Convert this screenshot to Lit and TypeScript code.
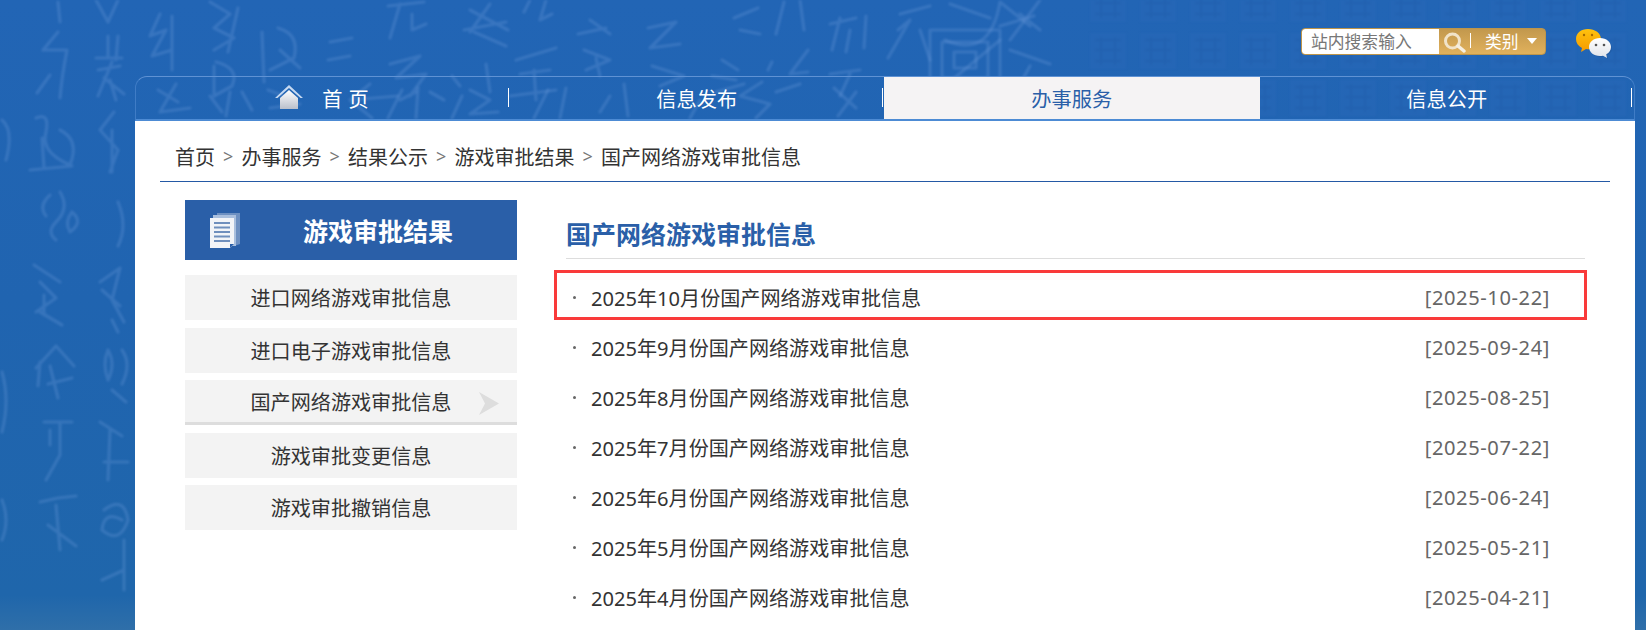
import { LitElement, html, css, svg } from "lit";
import { customElement } from "lit/decorators.js";

// strokes of the faint calligraphy behind the page
const TRACOS = [
  // left columns
  "M58 2 L60 22 M58 32 L43 50 M43 50 L67 50 Q62 75 60 98 M37 93 L50 75",
  "M96 0 L108 22 M118 0 L108 22",
  "M108 36 L108 56 M118 36 L116 60 M96 58 L122 58 M98 70 L120 66 M112 62 L98 96 M104 78 L124 94 M110 80 L116 100",
  "M36 118 Q50 112 46 132 Q40 152 70 165 Q80 140 60 130 M42 138 L44 168 M30 170 L72 166",
  "M114 112 L100 130 L118 150 L110 172 M112 130 L112 172",
  "M2 120 Q14 130 6 160",
  "M50 195 Q38 206 46 216 M60 192 Q70 208 56 222 Q46 232 56 240 M72 212 Q84 222 70 232 Q64 222 72 212",
  "M118 202 Q128 226 118 246",
  "M34 265 L60 282 M40 282 L56 298 L36 312 M44 295 L44 315 M40 312 L62 325",
  "M100 282 L120 268 L112 300 L124 322 M102 290 L120 306 M112 320 L118 332",
  "M36 368 L56 346 L74 366 M40 362 L38 386 M50 366 L58 398 M48 384 L72 378",
  "M108 350 Q116 364 108 380 Q102 364 108 350 M122 350 Q132 364 122 384 M112 390 L126 402",
  "M44 422 L72 422 M60 422 L60 455 L46 480 M50 430 L50 445",
  "M100 422 L122 436 M110 430 L108 480 M104 462 L128 462",
  "M40 502 L58 498 L76 496 M56 505 L60 550 M48 525 L76 546",
  "M104 510 Q124 495 128 520 Q120 545 102 530 Q104 510 122 520 M124 540 L124 590 M102 580 L124 570",
  "M2 372 Q10 400 2 432",
  "M2 500 Q10 520 2 540",
  // upper band
  "M160 14 L150 36 L166 30 L152 56 L172 50 M172 16 L172 70",
  "M210 2 L230 14 L214 28 L234 38 L214 50 M238 8 L228 52 M216 62 Q240 68 232 86 L214 96 L214 66",
  "M262 32 L264 82 M278 28 Q300 34 294 58 L270 70 M300 68 L280 50",
  "M330 42 L352 38 M328 60 L350 56",
  "M388 6 L424 2 M400 4 L390 38 M412 14 L412 30 L426 24",
  "M390 64 L420 56 L396 78 L426 74 L410 96 M400 100 L416 92",
  "M470 10 L508 30 M464 30 L506 22 M490 4 L470 32 M474 32 L506 46",
  "M452 76 L460 86 M486 64 L490 92",
  "M524 12 L530 0 M546 0 L540 20 L552 14",
  "M516 60 L556 48 M520 74 L550 70 M534 70 L536 100 M510 96 L556 90",
  "M590 20 L610 34 M578 34 L606 28 M584 50 L610 60 L586 70 M596 58 L600 76",
  "M648 28 L676 22 L650 48 L680 44 M652 66 L684 76 L660 86",
  "M734 18 L758 8 M740 30 L760 34",
  "M784 2 L776 34 M800 0 L804 30",
  "M830 24 L856 18 M840 18 L832 50 M850 30 L846 52 M866 16 L864 48",
  "M900 14 L930 6 M898 30 L910 20 L888 58 M920 30 L930 60",
  "M945 40 Q990 60 1000 2 L1030 26 M940 90 L1000 40",
  "M1040 0 L1010 40 M1020 14 L1040 30",
  "M722 60 L738 70 M712 76 L736 80 M716 92 L744 84",
  "M772 62 L768 70 M808 50 L790 74 L808 72",
  "M830 74 L860 70 M850 74 L840 96",
  "M950 4 L990 18 M1000 26 L1034 16",
  "M1010 50 L1050 64 M1030 66 L1020 84",
  // seal block in the middle
  "M930 30 H1000 V90 H930 Z M942 42 H988 V78 H942 Z M954 52 H976 V68 H954 Z",
  // nav band
  "M158 90 L178 102 M176 84 L160 112 M160 112 L190 108",
  "M230 92 L226 116 M210 96 L222 112 M242 92 L252 110",
  "M268 90 L290 98 M270 108 L300 104",
  "M370 84 L350 100 L372 118 M350 100 L398 96",
  "M402 90 L388 118 M418 88 L416 118 M430 92 L444 100",
  "M462 96 L452 118 M470 90 L490 100 L470 114 L498 112",
  "M548 90 L534 118 M566 88 L560 118",
  "M610 96 L600 112 M624 84 L628 116",
  "M762 82 L740 96 L770 104 L756 118 M776 92 L800 84",
  "M834 88 L856 108 M856 92 L838 116",
  "M1020 84 L1000 100 M990 92 L1030 118",
  "M700 100 L690 118",
];

const itens = [
  { texto: "进口网络游戏审批信息" },
  { texto: "进口电子游戏审批信息" },
  { texto: "国产网络游戏审批信息", ativo: true },
  { texto: "游戏审批变更信息" },
  { texto: "游戏审批撤销信息" },
];

const linhas = [
  ["2025年10月份国产网络游戏审批信息", "[2025-10-22]"],
  ["2025年9月份国产网络游戏审批信息", "[2025-09-24]"],
  ["2025年8月份国产网络游戏审批信息", "[2025-08-25]"],
  ["2025年7月份国产网络游戏审批信息", "[2025-07-22]"],
  ["2025年6月份国产网络游戏审批信息", "[2025-06-24]"],
  ["2025年5月份国产网络游戏审批信息", "[2025-05-21]"],
  ["2025年4月份国产网络游戏审批信息", "[2025-04-21]"],
];

const migalhas = ["首页", "办事服务", "结果公示", "游戏审批结果", "国产网络游戏审批信息"];

// seal tiles in the upper right corner
const selos = () => {
  const out = [];
  for (let col = 0; col < 11; col++) {
    for (let lin = 0; lin < 3; lin++) {
      const x = 1090 + col * 50;
      const y = -14 + lin * 47;
      out.push(svg`<rect class="selo" x=${x} y=${y} width="36" height="36"></rect>
        <path class="selo-traco" d=${`M${x + 5} ${y + 7}H${x + 31}M${x + 5} ${y + 17}H${x + 31}M${x + 5} ${y + 28}H${x + 31}M${x + 11} ${y + 4}V${y + 32}M${x + 25} ${y + 4}V${y + 32}`}></path>`);
    }
  }
  return out;
};

@customElement("app-root")
export class AppRoot extends LitElement {
  static styles = css`
    :host {
      display: block;
      position: relative;
      width: 1646px;
      height: 630px;
      overflow: hidden;
      background: linear-gradient(#2265b5 0, #2064b0 300px, #1f66ab 595px, #2f6fa9 630px);
      font-family: "Noto Sans", "Noto Sans CJK SC", sans-serif;
      color: #333;
    }

    .fundo {
      position: absolute;
      inset: 0;
      filter: blur(1px);
    }

    .fundo path.traco {
      fill: none;
      stroke: #6c9cdc;
      stroke-opacity: 0.3;
      stroke-width: 3.2;
      stroke-linecap: round;
      stroke-linejoin: round;
    }

    .fundo .selo {
      fill: #2b6ab8;
      fill-opacity: 0.4;
    }

    .fundo .selo-traco {
      fill: none;
      stroke: #1f5ba8;
      stroke-opacity: 0.4;
      stroke-width: 2;
    }

    .pagina {
      position: relative;
      display: flex;
      flex-direction: column;
      height: 100%;
    }

    .topo {
      display: flex;
      justify-content: flex-end;
      align-items: flex-start;
      height: 76px;
      padding: 28px 35px 0 0;
      box-sizing: border-box;
    }

    .busca {
      display: flex;
      width: 245px;
      height: 27px;
      border-radius: 4px;
      overflow: hidden;
      box-sizing: border-box;
      border: 1px solid #bd954a;
      background: linear-gradient(#c2984d, #e1b15c);
      color: #fff;
      font-size: 16.8px;
    }

    .busca .campo {
      width: 137px;
      padding-left: 9px;
      box-sizing: border-box;
      background: #fff;
      border-radius: 3px 0 0 3px;
      color: #777;
      font-size: 16.8px;
      line-height: 25px;
      white-space: nowrap;
    }

    .busca .lupa {
      width: 24px;
      height: 24px;
      margin: 1px 0 0 3px;
    }

    .busca .risco {
      width: 1px;
      height: 15px;
      margin: 4px 14px 0 4px;
      background: #fff;
    }

    .busca .tipo {
      line-height: 25px;
    }

    .busca .seta {
      width: 0;
      height: 0;
      margin: 9px 0 0 8px;
      border-left: 5px solid transparent;
      border-right: 5px solid transparent;
      border-top: 6px solid #fff;
    }

    .wechat {
      width: 38px;
      height: 31px;
      margin: 0 -2px 0 29px;
    }

    nav {
      display: grid;
      grid-template-columns: repeat(4, 1fr);
      width: 1500px;
      height: 45px;
      margin-left: 135px;
      box-sizing: border-box;
      border: 1px solid #5f92d4;
      border-bottom: 2px solid #4d8bd4;
      border-left-color: #3f7cc6;
      border-right-color: #3f7cc6;
      border-radius: 12px 12px 0 0;
    }

    nav a {
      display: flex;
      justify-content: center;
      align-items: center;
      gap: 19px;
      position: relative;
      color: #fff;
      font-size: 20.2px;
    }

    nav a:nth-child(-n + 2) {
      padding-right: 2px;
    }

    nav a::after {
      content: "";
      position: absolute;
      right: 2px;
      top: 11px;
      width: 1px;
      height: 19px;
      background: #fff;
    }

    nav a.ativo {
      background: #f5f3f4;
      color: #2a5fa8;
      margin-left: -1px;
    }

    nav a.ativo::after {
      display: none;
    }

    nav .casa {
      width: 28px;
      height: 24px;
      margin-top: -3px;
    }

    nav .inicio {
      letter-spacing: 0.5px;
    }

    .painel {
      flex: 1;
      width: 1500px;
      margin-left: 135px;
      background: #fff;
    }

    .migalhas {
      display: flex;
      align-items: center;
      height: 61px;
      margin: 0 25px;
      padding: 10px 0 0 15px;
      border-bottom: 1px solid #2459a5;
      font-size: 20px;
      box-sizing: border-box;
    }

    .migalhas i {
      width: 26.5px;
      text-align: center;
      font-style: normal;
      color: #777;
      font-size: 18px;
    }

    .corpo {
      display: flex;
      gap: 49px;
      padding: 18px 50px 0;
    }

    aside {
      width: 332px;
      flex: none;
    }

    .lateral-topo {
      display: flex;
      align-items: center;
      height: 60px;
      margin-bottom: 15px;
      background: #2a5fa8;
      color: #fff;
      font-size: 25px;
      font-weight: 700;
    }

    .lateral-topo svg {
      width: 34px;
      height: 38px;
      margin: 0 61px 0 23px;
    }

    .itens {
      display: grid;
      grid-auto-rows: 45px;
      row-gap: 7.5px;
    }

    .item {
      position: relative;
      display: flex;
      justify-content: center;
      align-items: center;
      box-sizing: border-box;
      background: #f3f3f3;
      font-size: 20.1px;
    }

    .item.ativo {
      border-bottom: 3px solid #ddd;
    }

    .item.ativo svg {
      position: absolute;
      right: 18px;
      top: 12px;
      width: 21px;
      height: 23px;
    }

    main {
      flex: 1;
      min-width: 0;
    }

    h2 {
      margin: 0 0 13px;
      height: 59px;
      line-height: 68px;
      box-sizing: border-box;
      border-bottom: 1px solid #ddd;
      color: #2a5fa8;
      font-size: 25px;
      font-weight: 700;
    }

    .linha {
      position: relative;
      display: flex;
      align-items: center;
      height: 50px;
      padding: 0 35px 0 25px;
      font-size: 20.1px;
    }

    .linha::before {
      content: "";
      position: absolute;
      left: 7px;
      top: 24px;
      width: 3px;
      height: 3px;
      border-radius: 50%;
      background: #666;
    }

    .linha span {
      flex: 1;
    }

    .linha time {
      color: #666;
      letter-spacing: 0.6px;
    }

    .marca {
      position: absolute;
      inset: -2px -2px 2px -12px;
      border: 3px solid #f93a3a;
    }
  `;

  render() {
    return html`
      <svg class="fundo" viewBox="0 0 1646 630" width="1646" height="630">
        ${selos()}
        ${TRACOS.map((d) => svg`<path class="traco" d=${d}></path>`)}
      </svg>
      <div class="pagina">
        <div class="topo">
          <div class="busca">
            <div class="campo">站内搜索输入</div>
            <svg class="lupa" viewBox="0 0 24 24">
              <circle cx="10.5" cy="11" r="7" fill="none" stroke="#f1e3c8" stroke-width="3"></circle>
              <path d="M16 16l6 5" stroke="#f6efe0" stroke-width="3.5" stroke-linecap="round"></path>
            </svg>
            <div class="risco"></div>
            <div class="tipo">类别</div>
            <div class="seta"></div>
          </div>
          <svg class="wechat" viewBox="0 0 38 31">
            <defs>
              <linearGradient id="amarelo" x1="0" y1="0" x2="0" y2="1">
                <stop offset="0" stop-color="#ffc20e"></stop>
                <stop offset="1" stop-color="#f59a00"></stop>
              </linearGradient>
              <linearGradient id="branco" x1="0" y1="0" x2="0" y2="1">
                <stop offset="0" stop-color="#ffffff"></stop>
                <stop offset="1" stop-color="#dfe3ea"></stop>
              </linearGradient>
            </defs>
            <path d="M13 1C6 1 1 5 1 11c0 4 2 7 6 9l-1 4 5-3c1 .2 2 .2 3 .2 7 0 12-4.500 12-10.200S20 1 13 1z" fill="url(#amarelo)"></path>
            <circle cx="9" cy="7" r="1.200" fill="#a66a00"></circle>
            <circle cx="17" cy="7" r="1.200" fill="#a66a00"></circle>
            <path d="M25 10c-6.500 0-11 4-11 9s4.500 9 11 9c1 0 2 0 3-.3l4 2.300-.8-3.700c3-1.600 4.800-4.200 4.800-7.300 0-5-4.500-9-11-9z" fill="#1c4f8f" opacity=".35" transform="translate(1 1)"></path>
            <path d="M25 10c-6.500 0-11 4-11 9s4.500 9 11 9c1 0 2 0 3-.3l4 2.300-.8-3.700c3-1.600 4.800-4.200 4.800-7.300 0-5-4.500-9-11-9z" fill="url(#branco)"></path>
            <circle cx="21" cy="17" r="1.300" fill="#555"></circle>
            <circle cx="29" cy="17" r="1.300" fill="#555"></circle>
          </svg>
        </div>
        <nav>
          <a>
            <svg class="casa" viewBox="0 0 28 24">
              <defs>
                <linearGradient id="parede" x1="0" y1="0" x2="0" y2="1">
                  <stop offset="0" stop-color="#ffffff"></stop>
                  <stop offset="1" stop-color="#b9bfcb"></stop>
                </linearGradient>
              </defs>
              <path d="M14 0L0 13h2.500L14 3l11.500 10H28z" fill="#c6d9f1"></path>
              <path d="M14 5L5 13v11h18V13z" fill="url(#parede)"></path>
            </svg>
            <span class="inicio">首 页</span>
          </a>
          <a>信息发布</a>
          <a class="ativo">办事服务</a>
          <a>信息公开</a>
        </nav>
        <div class="painel">
          <div class="migalhas">
            ${migalhas.map(
              (m, i) => html`${i > 0 ? html`<i>&gt;</i>` : ""}<span>${m}</span>`
            )}
          </div>
          <div class="corpo">
            <aside>
              <div class="lateral-topo">
                <svg viewBox="0 0 34 38">
                  <path d="M9 2h23v31l-6 2H9z" fill="#6d90c2"></path>
                  <path d="M5 4h23v31H5z" fill="#a9bfde"></path>
                  <path d="M2 7h24v26l-4 4H2z" fill="#f2f4f8"></path>
                  <path d="M6 12h16M6 16.500h16M6 21h16M6 25.500h16M6 30h16" stroke="#6f8fbd" stroke-width="2.200"></path>
                  <path d="M22 37v-4h4z" fill="#2a5fa8"></path>
                </svg>
                游戏审批结果
              </div>
              <div class="itens">
                ${itens.map(
                  (i) => html`
                    <div class="item ${i.ativo ? "ativo" : ""}">
                      ${i.texto}
                      ${i.ativo
                        ? html`<svg viewBox="0 0 21 23">
                            <path d="M1 0l20 11.500L1 23l6-11.500z" fill="#ddd"></path>
                          </svg>`
                        : ""}
                    </div>
                  `
                )}
              </div>
            </aside>
            <main>
              <h2>国产网络游戏审批信息</h2>
              ${linhas.map(
                ([titulo, data], i) => html`
                  <div class="linha">
                    <span>${titulo}</span>
                    <time>${data}</time>
                    ${i === 0 ? html`<div class="marca"></div>` : ""}
                  </div>
                `
              )}
            </main>
          </div>
        </div>
      </div>
    `;
  }
}
